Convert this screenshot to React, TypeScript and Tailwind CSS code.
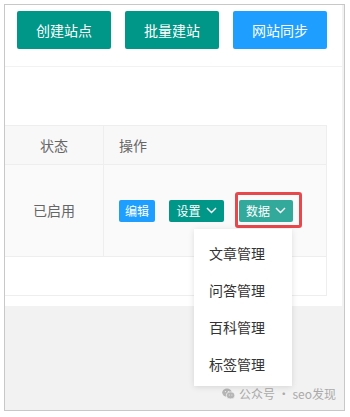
const FONT = "font-['Microsoft_YaHei','Noto_Sans_CJK_SC',sans-serif]";

function Chevron() {
  return (
    <svg width="11" height="7" viewBox="0 0 11 7" fill="none" aria-hidden>
      <path d="M1 1l4.5 4.5L10 1" stroke="white" strokeWidth="1.4" />
    </svg>
  );
}

function WeChatIcon() {
  return (
    <svg width="13" height="12" viewBox="0 0 13 12" aria-hidden>
      <ellipse cx="5" cy="4.6" rx="4.8" ry="4" fill="#b5b5b5" />
      <ellipse cx="8.6" cy="7.4" rx="4.2" ry="3.5" fill="#b5b5b5" stroke="#f2f2f2" strokeWidth="0.8" />
      <circle cx="3.4" cy="3.6" r="0.6" fill="#f2f2f2" />
      <circle cx="6.4" cy="3.6" r="0.6" fill="#f2f2f2" />
      <circle cx="7.3" cy="6.9" r="0.5" fill="#f2f2f2" />
      <circle cx="9.9" cy="6.9" r="0.5" fill="#f2f2f2" />
    </svg>
  );
}

const menuItems = ["文章管理", "问答管理", "百科管理", "标签管理"];

export default function App() {
  return (
    <div className={`w-[350px] h-[417px] bg-white pt-[4px] pl-[4px] ${FONT}`}>
      <div className="relative w-[341px] h-[407px] border border-[#c8c8c8] bg-[#f2f2f2]">
        <div className="w-[337px] h-[301px] bg-white">
          {/* toolbar */}
          <div className="h-[62px] border-b border-[#f2f2f2] pl-[12px] pt-[6px] flex gap-[14px]">
            <button className="w-[94px] h-[38px] rounded-[2px] bg-[#009688] text-white text-[14px]">创建站点</button>
            <button className="w-[94px] h-[38px] rounded-[2px] bg-[#009688] text-white text-[14px]">批量建站</button>
            <button className="w-[94px] h-[38px] rounded-[2px] bg-[#1e9fff] text-white text-[14px]">网站同步</button>
          </div>

          {/* table */}
          <div className="mt-[58px] w-[322px] border-t border-r border-[#eeeeee] text-[14px] text-[#666]">
            <div className="flex h-[39px] bg-[#f8f8f8] border-b border-[#eeeeee]">
              <div className="w-[99px] border-r border-[#eeeeee] flex items-center justify-center">状态</div>
              <div className="flex-1 flex items-center pl-[15px]">操作</div>
            </div>
            <div className="flex h-[92px] bg-[#fafafa] border-b border-[#eeeeee]">
              <div className="w-[99px] border-r border-[#eeeeee] flex items-center justify-center">已启用</div>
              <div className="flex-1 flex items-center pl-[15px] text-[12px] text-white">
                <span className="w-[36px] h-[22px] rounded-[2px] bg-[#1e9fff] flex items-center justify-center">编辑</span>
                <span className="ml-[14px] w-[55px] h-[22px] rounded-[2px] bg-[#009688] flex items-center justify-center gap-[5px]">
                  设置
                  <Chevron />
                </span>
                <div className="relative ml-[15px]">
                  <span className="w-[54px] h-[22px] rounded-[2px] bg-[#33a99b] flex items-center justify-center gap-[5px]">
                    数据
                    <Chevron />
                  </span>
                  <div className="absolute -left-[4px] -right-[9px] -top-[8px] -bottom-[6px] border-[3px] border-[#e8484c] rounded-[3px]" />
                  <div className="absolute left-[-45px] top-[29px] w-[98px] bg-white pt-[6px] pb-[3px] shadow-[0_1px_6px_rgba(0,0,0,0.12)] text-[14px] text-[#333] z-10">
                    {menuItems.map((item) => (
                      <div key={item} className="h-[37px] flex items-center pl-[15px]">
                        {item}
                      </div>
                    ))}
                  </div>
                </div>
              </div>
            </div>
            <div className="h-[39px] bg-white border-b border-[#eeeeee]" />
          </div>
        </div>

        {/* watermark */}
        <div className="absolute right-[8px] bottom-[7px] flex items-center gap-[4px] text-[12px] text-[#aaa]">
          <WeChatIcon />
          <span>公众号 · seo发现</span>
        </div>
      </div>
    </div>
  );
}
